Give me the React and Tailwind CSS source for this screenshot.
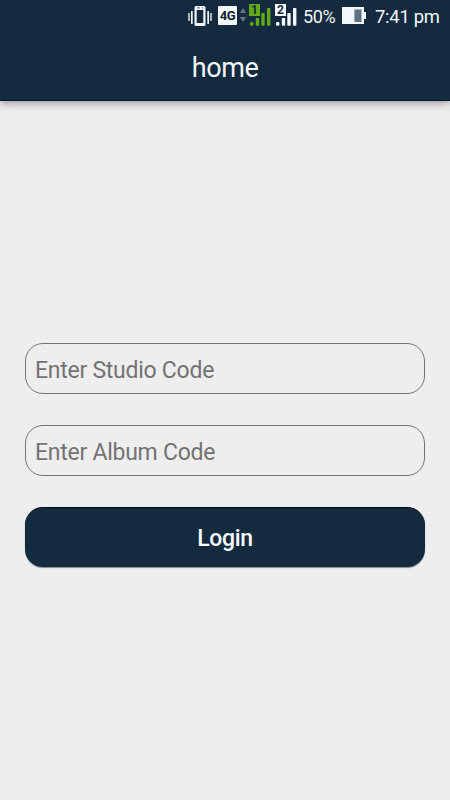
import React from "react";

function VibrateIcon() {
  return (
    <svg width="24" height="22" viewBox="0 0 24 22" fill="#f1f7fa">
      <rect x="0.3" y="8" width="1.4" height="8" rx="0.6" />
      <rect x="3" y="6" width="1.7" height="13" rx="0.6" />
      <path fillRule="evenodd" d="M8 1h8a1.5 1.5 0 0 1 1.5 1.5v17A1.5 1.5 0 0 1 16 21H8a1.5 1.5 0 0 1-1.5-1.5v-17A1.5 1.5 0 0 1 8 1Zm.7 4v13h6.6V5Z" />
      <path d="M9 2.9h3M14 2.9h1" stroke="#142a3f" strokeWidth="0.7" />
      <rect x="19.3" y="6" width="1.7" height="13" rx="0.6" />
      <rect x="22.3" y="8" width="1.4" height="8" rx="0.6" />
    </svg>
  );
}

function DataArrows() {
  return (
    <svg width="6" height="16" viewBox="0 0 6 16" fill="#667684">
      <path d="M0 6 3 1l3 5ZM0 10h6l-3 5Z" />
    </svg>
  );
}

function Signal({ number, color, digit }) {
  return (
    <svg className="overflow-visible" width="22" height="23" viewBox="0 0 22 23" fill={color}>
      <rect x="0" y="0" width="11" height="12" />
      <text x="5.5" y="10.3" textAnchor="middle" fill={digit} fontSize="12" fontWeight="700" fontFamily="Roboto, sans-serif">{number}</text>
      <rect x="1" y="18" width="3.4" height="3.8" rx="1.2" />
      <rect x="6.8" y="14" width="3.4" height="7.8" rx="0.8" />
      <rect x="12.3" y="9" width="3.4" height="12.8" rx="0.8" />
      <rect x="18" y="4" width="3.4" height="17.8" rx="0.8" />
    </svg>
  );
}

function Battery() {
  return (
    <svg width="24" height="17" viewBox="0 0 24 17">
      <path fill="#f1f7fa" d="M0 0h22v5h2v7h-2v5H0Z" />
      <path fill="#5f7080" d="M12.4 2.5H19.5v12.5h-7.1Z" />
    </svg>
  );
}

function StatusBar() {
  return (
    <div className="flex h-[33px] items-start pl-[188px] text-[#f1f7fa]">
      <div className="mt-[5px] shrink-0"><VibrateIcon /></div>
      <div className="mt-[6px] ml-[6px] flex h-[19px] w-[19px] shrink-0 items-center justify-center rounded-[1px] bg-[#f4f8fa] text-[13px] font-bold tracking-[-0.3px] text-[#12202d]">4G</div>
      <div className="mt-[7px] ml-[3px] shrink-0"><DataArrows /></div>
      <div className="mt-1 ml-[3px] shrink-0"><Signal number="1" color="#62aa18" digit="#142a3f" /></div>
      <div className="mt-1 ml-1 shrink-0"><Signal number="2" color="#f1f7fa" digit="#142a3f" /></div>
      <span className="mt-[5px] ml-[6px] w-[39px] shrink-0 text-[18px] leading-6 tracking-[-0.4px]">50%</span>
      <div className="mt-[7px] shrink-0"><Battery /></div>
      <span className="mt-[5px] ml-[9px] shrink-0 text-[18.4px] leading-6 tracking-[-0.25px] whitespace-nowrap">7:41 pm</span>
    </div>
  );
}

function CodeInput({ placeholder }) {
  return (
    <input
      type="text"
      placeholder={placeholder}
      className="block h-[51px] w-full rounded-[18px] border border-[#737373] bg-transparent px-[9px] pt-[4px] text-[23px] tracking-[-0.26px] outline-none placeholder:text-[#737373]"
    />
  );
}

export default function App() {
  return (
    <div className="flex h-[800px] w-[450px] flex-col overflow-hidden bg-[#eeeeee] font-['Roboto',sans-serif]">
      <header className="h-[101px] shrink-0 border-b border-[#07172b] bg-[#142a3f] shadow-[0_2px_8px_rgba(75,45,65,0.5)]">
        <StatusBar />
        <h1 className="mt-[17px] text-center text-[27px] leading-9 font-normal tracking-[-0.4px] text-[#f1f7fa]">home</h1>
      </header>
      <form className="mt-[242px] flex flex-col px-[25px]" onSubmit={(event) => event.preventDefault()}>
        <CodeInput placeholder="Enter Studio Code" />
        <div className="mt-[31px]"><CodeInput placeholder="Enter Album Code" /></div>
        <button type="submit" className="mt-[31px] h-[60px] w-full rounded-[18px] border-t border-[#020e1b] bg-[#142a3f] pt-[4px] text-[23px] font-medium tracking-[-0.3px] text-[#f8fafc] shadow-[0_1px_1px_rgba(20,42,63,0.5)]">Login</button>
      </form>
    </div>
  );
}
